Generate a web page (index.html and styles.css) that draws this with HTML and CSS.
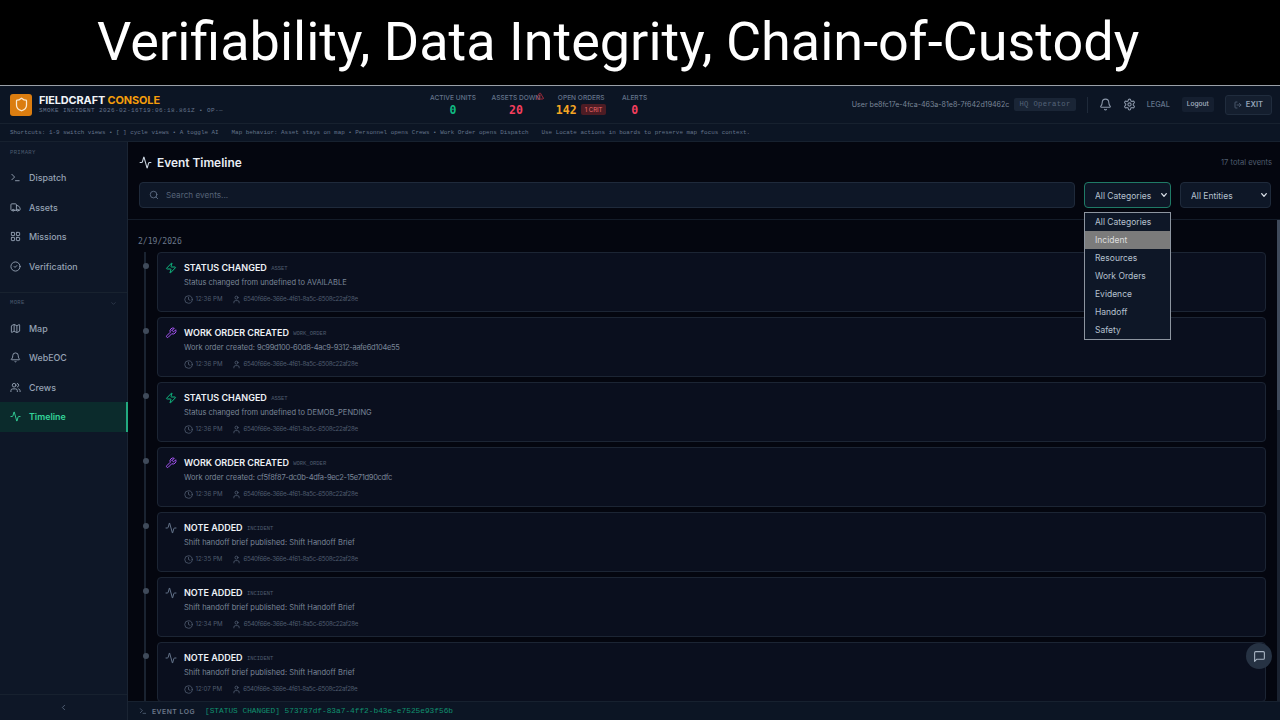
FILE: index.html
```html
<!DOCTYPE html>
<html lang="en">
<head>
<meta charset="utf-8">
<title>Event Timeline</title>
<link rel="stylesheet" href="styles.css">
</head>
<body>
<svg class="defs" width="0" height="0" aria-hidden="true">
  <symbol id="i-activity" viewBox="0 0 24 24"><path d="M22 12h-2.48a2 2 0 0 0-1.93 1.46l-2.35 8.36a.25.25 0 0 1-.48 0L9.24 2.18a.25.25 0 0 0-.48 0l-2.35 8.36A2 2 0 0 1 4.49 12H2"/></symbol>
  <symbol id="i-zap" viewBox="0 0 24 24"><path d="M4 14a1 1 0 0 1-.78-1.63l9.9-10.2a.5.5 0 0 1 .86.46l-1.92 6.02A1 1 0 0 0 13 10h7a1 1 0 0 1 .78 1.63l-9.9 10.2a.5.5 0 0 1-.86-.46l1.92-6.02A1 1 0 0 0 11 14z"/></symbol>
  <symbol id="i-wrench" viewBox="0 0 24 24"><path d="M14.7 6.3a1 1 0 0 0 0 1.4l1.6 1.6a1 1 0 0 0 1.4 0l3.77-3.77a6 6 0 0 1-7.94 7.94l-6.91 6.91a2.12 2.12 0 0 1-3-3l6.91-6.91a6 6 0 0 1 7.94-7.94l-3.76 3.76z"/></symbol>
  <symbol id="i-clock" viewBox="0 0 24 24"><circle cx="12" cy="12" r="10"/><path d="M12 6v6l4 2"/></symbol>
  <symbol id="i-user" viewBox="0 0 24 24"><path d="M19 21v-2a4 4 0 0 0-4-4H9a4 4 0 0 0-4 4v2"/><circle cx="12" cy="7" r="4"/></symbol>
  <symbol id="i-search" viewBox="0 0 24 24"><circle cx="11" cy="11" r="8"/><path d="m21 21-4.3-4.3"/></symbol>
  <symbol id="i-terminal" viewBox="0 0 24 24"><path d="M4 17l6-6-6-6"/><path d="M12 19h8"/></symbol>
  <symbol id="i-truck" viewBox="0 0 24 24"><path d="M14 18V6a2 2 0 0 0-2-2H4a2 2 0 0 0-2 2v11a1 1 0 0 0 1 1h2"/><path d="M15 18H9"/><path d="M19 18h2a1 1 0 0 0 1-1v-3.65a1 1 0 0 0-.22-.624l-3.48-4.35A1 1 0 0 0 17.52 8H14"/><circle cx="17" cy="18" r="2"/><circle cx="7" cy="18" r="2"/></symbol>
  <symbol id="i-grid" viewBox="0 0 24 24"><rect x="3" y="3" width="7" height="7" rx="1"/><rect x="14" y="3" width="7" height="7" rx="1"/><rect x="14" y="14" width="7" height="7" rx="1"/><rect x="3" y="14" width="7" height="7" rx="1"/></symbol>
  <symbol id="i-check" viewBox="0 0 24 24"><circle cx="12" cy="12" r="10"/><path d="m9 12 2 2 4-4"/></symbol>
  <symbol id="i-map" viewBox="0 0 24 24"><path d="M14.106 5.553a2 2 0 0 0 1.788 0l3.659-1.83A1 1 0 0 1 21 4.619v12.764a1 1 0 0 1-.553.894l-4.553 2.277a2 2 0 0 1-1.788 0l-4.212-2.106a2 2 0 0 0-1.788 0l-3.659 1.83A1 1 0 0 1 3 19.381V6.618a1 1 0 0 1 .553-.894l4.553-2.277a2 2 0 0 1 1.788 0z"/><path d="M15 5.764v15"/><path d="M9 3.236v15"/></symbol>
  <symbol id="i-bell" viewBox="0 0 24 24"><path d="M10.268 21a2 2 0 0 0 3.464 0"/><path d="M3.262 15.326A1 1 0 0 0 4 17h16a1 1 0 0 0 .74-1.673C19.41 13.956 18 12.499 18 8A6 6 0 0 0 6 8c0 4.499-1.411 5.956-2.738 7.326"/></symbol>
  <symbol id="i-users" viewBox="0 0 24 24"><path d="M16 21v-2a4 4 0 0 0-4-4H6a4 4 0 0 0-4 4v2"/><path d="M16 3.128a4 4 0 0 1 0 7.744"/><path d="M22 21v-2a4 4 0 0 0-3-3.87"/><circle cx="9" cy="7" r="4"/></symbol>
  <symbol id="i-settings" viewBox="0 0 24 24"><path d="M12.22 2h-.44a2 2 0 0 0-2 2v.18a2 2 0 0 1-1 1.73l-.43.25a2 2 0 0 1-2 0l-.15-.08a2 2 0 0 0-2.73.73l-.22.38a2 2 0 0 0 .73 2.73l.15.1a2 2 0 0 1 1 1.72v.51a2 2 0 0 1-1 1.74l-.15.09a2 2 0 0 0-.73 2.73l.22.38a2 2 0 0 0 2.73.73l.15-.08a2 2 0 0 1 2 0l.43.25a2 2 0 0 1 1 1.73V20a2 2 0 0 0 2 2h.44a2 2 0 0 0 2-2v-.18a2 2 0 0 1 1-1.73l.43-.25a2 2 0 0 1 2 0l.15.08a2 2 0 0 0 2.73-.73l.22-.39a2 2 0 0 0-.73-2.73l-.15-.08a2 2 0 0 1-1-1.74v-.5a2 2 0 0 1 1-1.74l.15-.09a2 2 0 0 0 .73-2.73l-.22-.38a2 2 0 0 0-2.73-.73l-.15.08a2 2 0 0 1-2 0l-.43-.25a2 2 0 0 1-1-1.73V4a2 2 0 0 0-2-2z"/><circle cx="12" cy="12" r="3"/></symbol>
  <symbol id="i-logout" viewBox="0 0 24 24"><path d="M16 17l5-5-5-5"/><path d="M21 12H9"/><path d="M9 21H5a2 2 0 0 1-2-2V5a2 2 0 0 1 2-2h4"/></symbol>
  <symbol id="i-alert" viewBox="0 0 24 24"><path d="m21.73 18-8-14a2 2 0 0 0-3.48 0l-8 14A2 2 0 0 0 4 21h16a2 2 0 0 0 1.73-3"/><path d="M12 9v4"/><path d="M12 17h.01"/></symbol>
  <symbol id="i-shield" viewBox="0 0 24 24"><path d="M20 13c0 5-3.5 7.5-7.66 8.95a1 1 0 0 1-.67-.01C7.5 20.5 4 18 4 13V6a1 1 0 0 1 1-1c2 0 4.5-1.2 6.24-2.72a1.17 1.17 0 0 1 1.52 0C14.51 3.81 17 5 19 5a1 1 0 0 1 1 1z"/></symbol>
  <symbol id="i-left" viewBox="0 0 24 24"><path d="m15 18-6-6 6-6"/></symbol>
  <symbol id="i-down" viewBox="0 0 24 24"><path d="m6 9 6 6 6-6"/></symbol>
  <symbol id="i-msg" viewBox="0 0 24 24"><path d="M21 15a2 2 0 0 1-2 2H7l-4 4V5a2 2 0 0 1 2-2h14a2 2 0 0 1 2 2z"/></symbol>
</svg>

<div class="banner"><h1 class="banner-title">Verifiability, Data Integrity, Chain-of-Custody</h1></div>

<div class="app">
  <header class="topbar">
    <div class="brand">
      <span class="logo"><svg class="ico logo-ico"><use href="#i-shield"/></svg></span>
      <div class="brand-text">
        <div class="brand-name">FIELDCRAFT <span class="brand-accent">CONSOLE</span></div>
        <div class="brand-sub">SMOKE INCIDENT 2026-02-16T19:06:18.861Z • OP-—</div>
      </div>
    </div>
    <div class="stats">
      <div class="stat"><div class="stat-label">ACTIVE UNITS</div><div class="stat-value green">0</div></div>
      <div class="stat stat-alerted"><div class="stat-label">ASSETS DOWN</div><div class="stat-value red">20</div><svg class="ico stat-alert"><use href="#i-alert"/></svg></div>
      <div class="stat"><div class="stat-label">OPEN ORDERS</div><div class="stat-row"><span class="stat-value amber">142</span><span class="crit">1 CRIT</span></div></div>
      <div class="stat"><div class="stat-label">ALERTS</div><div class="stat-value red">0</div></div>
    </div>
    <div class="userbar">
      <span class="user-id">User be8fc17e-4fca-463a-81e8-7f642d19462c</span>
      <span class="role">HQ Operator</span>
      <span class="divider"></span>
      <svg class="ico top-ico"><use href="#i-bell"/></svg>
      <svg class="ico top-ico"><use href="#i-settings"/></svg>
      <span class="legal">LEGAL</span>
      <span class="logout">Logout</span>
      <span class="exit"><svg class="ico exit-ico"><use href="#i-logout"/></svg>EXIT</span>
    </div>
  </header>
  <div class="hints">
    <span>Shortcuts: 1-9 switch views • [ ] cycle views • A toggle AI</span>
    <span>Map behavior: Asset stays on map • Personnel opens Crews • Work Order opens Dispatch</span>
    <span>Use Locate actions in boards to preserve map focus context.</span>
  </div>

  <div class="workspace">
    <aside class="sidebar">
      <div class="nav-scroll">
        <div class="nav-head">PRIMARY</div>
        <a class="nav-item"><svg class="ico nav-ico"><use href="#i-terminal"/></svg>Dispatch</a>
        <a class="nav-item"><svg class="ico nav-ico"><use href="#i-truck"/></svg>Assets</a>
        <a class="nav-item"><svg class="ico nav-ico"><use href="#i-grid"/></svg>Missions</a>
        <a class="nav-item"><svg class="ico nav-ico"><use href="#i-check"/></svg>Verification</a>
        <div class="nav-sep"></div>
        <div class="nav-head nav-head-more">MORE<svg class="ico more-ico"><use href="#i-down"/></svg></div>
        <a class="nav-item"><svg class="ico nav-ico"><use href="#i-map"/></svg>Map</a>
        <a class="nav-item"><svg class="ico nav-ico"><use href="#i-bell"/></svg>WebEOC</a>
        <a class="nav-item"><svg class="ico nav-ico"><use href="#i-users"/></svg>Crews</a>
        <a class="nav-item active"><svg class="ico nav-ico"><use href="#i-activity"/></svg>Timeline</a>
      </div>
      <div class="collapse"><svg class="ico collapse-ico"><use href="#i-left"/></svg></div>
    </aside>

    <main class="content">
      <section class="toolbar">
        <div class="title-row">
          <h2 class="page-title"><svg class="ico title-ico"><use href="#i-activity"/></svg>Event Timeline</h2>
          <span class="total">17 total events</span>
        </div>
        <div class="filters">
          <div class="search"><svg class="ico search-ico"><use href="#i-search"/></svg><span>Search events...</span></div>
          <div class="select-wrap">
            <select class="select select-focus"><option>All Categories</option></select>
            <ul class="options">
              <li>All Categories</li>
              <li class="hover">Incident</li>
              <li>Resources</li>
              <li>Work Orders</li>
              <li>Evidence</li>
              <li>Handoff</li>
              <li>Safety</li>
            </ul>
          </div>
          <select class="select select-b"><option>All Entities</option></select>
        </div>
      </section>
      <section class="feed">
        <div class="date">2/19/2026</div>
        <div class="events">
          <article class="event"><span class="dot"></span><div class="card"><svg class="ico ev-ico green"><use href="#i-zap"/></svg><div class="ev-body"><div class="ev-title">STATUS CHANGED <span class="ev-tag">ASSET</span></div><div class="ev-desc">Status changed from undefined to AVAILABLE</div><div class="ev-meta"><svg class="ico meta-ico"><use href="#i-clock"/></svg><span class="ev-time">12:36 PM</span><svg class="ico meta-ico"><use href="#i-user"/></svg><span class="meta-id">6540f66e-366e-4f61-8a5c-6508c22af28e</span></div></div></div></article>
          <article class="event"><span class="dot"></span><div class="card"><svg class="ico ev-ico purple"><use href="#i-wrench"/></svg><div class="ev-body"><div class="ev-title">WORK ORDER CREATED <span class="ev-tag">WORK_ORDER</span></div><div class="ev-desc">Work order created: <span class="uuid">9c99d100-60d8-4ac9-9312-aafe6d104e55</span></div><div class="ev-meta"><svg class="ico meta-ico"><use href="#i-clock"/></svg><span class="ev-time">12:36 PM</span><svg class="ico meta-ico"><use href="#i-user"/></svg><span class="meta-id">6540f66e-366e-4f61-8a5c-6508c22af28e</span></div></div></div></article>
          <article class="event"><span class="dot"></span><div class="card"><svg class="ico ev-ico green"><use href="#i-zap"/></svg><div class="ev-body"><div class="ev-title">STATUS CHANGED <span class="ev-tag">ASSET</span></div><div class="ev-desc">Status changed from undefined to DEMOB_PENDING</div><div class="ev-meta"><svg class="ico meta-ico"><use href="#i-clock"/></svg><span class="ev-time">12:36 PM</span><svg class="ico meta-ico"><use href="#i-user"/></svg><span class="meta-id">6540f66e-366e-4f61-8a5c-6508c22af28e</span></div></div></div></article>
          <article class="event"><span class="dot"></span><div class="card"><svg class="ico ev-ico purple"><use href="#i-wrench"/></svg><div class="ev-body"><div class="ev-title">WORK ORDER CREATED <span class="ev-tag">WORK_ORDER</span></div><div class="ev-desc">Work order created: <span class="uuid">cf5f8f87-dc0b-4dfa-9ec2-15e71d90cdfc</span></div><div class="ev-meta"><svg class="ico meta-ico"><use href="#i-clock"/></svg><span class="ev-time">12:36 PM</span><svg class="ico meta-ico"><use href="#i-user"/></svg><span class="meta-id">6540f66e-366e-4f61-8a5c-6508c22af28e</span></div></div></div></article>
          <article class="event"><span class="dot"></span><div class="card"><svg class="ico ev-ico gray"><use href="#i-activity"/></svg><div class="ev-body"><div class="ev-title">NOTE ADDED <span class="ev-tag">INCIDENT</span></div><div class="ev-desc">Shift handoff brief published: Shift Handoff Brief</div><div class="ev-meta"><svg class="ico meta-ico"><use href="#i-clock"/></svg><span class="ev-time">12:35 PM</span><svg class="ico meta-ico"><use href="#i-user"/></svg><span class="meta-id">6540f66e-366e-4f61-8a5c-6508c22af28e</span></div></div></div></article>
          <article class="event"><span class="dot"></span><div class="card"><svg class="ico ev-ico gray"><use href="#i-activity"/></svg><div class="ev-body"><div class="ev-title">NOTE ADDED <span class="ev-tag">INCIDENT</span></div><div class="ev-desc">Shift handoff brief published: Shift Handoff Brief</div><div class="ev-meta"><svg class="ico meta-ico"><use href="#i-clock"/></svg><span class="ev-time">12:34 PM</span><svg class="ico meta-ico"><use href="#i-user"/></svg><span class="meta-id">6540f66e-366e-4f61-8a5c-6508c22af28e</span></div></div></div></article>
          <article class="event"><span class="dot"></span><div class="card"><svg class="ico ev-ico gray"><use href="#i-activity"/></svg><div class="ev-body"><div class="ev-title">NOTE ADDED <span class="ev-tag">INCIDENT</span></div><div class="ev-desc">Shift handoff brief published: Shift Handoff Brief</div><div class="ev-meta"><svg class="ico meta-ico"><use href="#i-clock"/></svg><span class="ev-time">12:07 PM</span><svg class="ico meta-ico"><use href="#i-user"/></svg><span class="meta-id">6540f66e-366e-4f61-8a5c-6508c22af28e</span></div></div></div></article>
        </div>
        <span class="scrollbar"><span class="scroll-thumb"></span></span>
        <button class="chat"><svg class="ico chat-ico"><use href="#i-msg"/></svg></button>
      </section>
      <footer class="eventlog">
        <svg class="ico log-ico"><use href="#i-terminal"/></svg>
        <span class="log-label">EVENT LOG</span>
        <span class="log-line">[STATUS CHANGED] 573787df-83a7-4ff2-b43e-e7525e93f56b</span>
      </footer>
    </main>
  </div>
</div>
</body>
</html>
```

FILE: styles.css
```css
* { box-sizing: border-box; }
html, body { margin: 0; height: 100%; }
body {
  width: 1280px;
  height: 720px;
  overflow: hidden;
  background: #000;
  font-family: Inter, "Noto Sans", sans-serif;
  color: #cbd5e1;
  display: flex;
  flex-direction: column;
}
.defs { position: absolute; }
.ico {
  fill: none;
  stroke: currentColor;
  stroke-width: 2;
  stroke-linecap: round;
  stroke-linejoin: round;
  flex: none;
}

.banner {
  height: 85px;
  flex: none;
  background: #000;
  padding: 0 0 1px 97px;
  display: flex;
  align-items: center;
}
.banner-title {
  margin: 0;
  font-family: Roboto, sans-serif;
  font-weight: 400;
  font-size: 54px;
  line-height: 1;
  color: #fff;
  white-space: nowrap;
}

.app {
  flex: 1;
  min-height: 0;
  display: flex;
  flex-direction: column;
  border-top: 1px solid #9aa0a8;
  background: #0c1524;
}

.topbar {
  height: 38px;
  flex: none;
  display: flex;
  align-items: center;
  padding: 0 8px 0 10px;
  background: #0c1524;
  border-bottom: 1px solid #17212f;
  position: relative;
}
.brand { display: flex; align-items: center; gap: 7px; width: 420px; }
.logo {
  width: 22px; height: 22px;
  border-radius: 3px;
  background: #db7d10;
  display: flex; align-items: center; justify-content: center;
  color: #fbe9cf;
}
.logo-ico { width: 15px; height: 15px; }
.brand-name { font-size: 10.9px; font-weight: 700; color: #f1f5f9; line-height: 12px; letter-spacing: -0.1px; }
.brand-accent { color: #f59e0b; }
.brand-sub {
  font-family: "Liberation Mono", monospace;
  font-size: 6px;
  line-height: 8px;
  color: #64748b;
  letter-spacing: 0.4px;
  margin-top: 1px;
  white-space: nowrap;
}

.stats { display: flex; gap: 15.5px; margin-top: 1px; }
.stat { text-align: center; position: relative; }
.stat-label { font-size: 6.6px; font-weight: 500; color: #64748b; line-height: 9px; white-space: nowrap; }
.stat-value {
  font-family: "DejaVu Sans Mono", monospace;
  font-size: 11.5px;
  line-height: 14px;
  font-weight: 700;
}
.stat-row { display: flex; align-items: center; gap: 4px; }
.crit {
  font-size: 6px;
  line-height: 11px;
  padding: 0 4px;
  border-radius: 2px;
  background: #4d1c24;
  color: #ef6a6a;
}
.stat-alert { position: absolute; width: 8px; height: 8px; top: -2px; right: -4px; color: #dc3545; stroke-width: 2; }
.green { color: #10b981; }
.red { color: #f43f5e; }
.amber { color: #f5a623; }
.purple { color: #a855f7; }
.gray { color: #64748b; }

.userbar { margin-left: auto; display: flex; align-items: center; }
.user-id { font-size: 7.1px; color: #7b8799; white-space: nowrap; }
.role {
  font-family: "Liberation Mono", monospace;
  font-size: 7.2px;
  line-height: 13px;
  letter-spacing: 0.35px;
  padding: 0 5px;
  margin-left: 5px;
  border-radius: 2px;
  background: #1a2536;
  color: #556478;
  white-space: nowrap;
}
.divider { width: 1px; height: 16px; background: #1f2a3a; margin: 0 11px; }
.top-ico { width: 13px; height: 13px; color: #8a96a8; margin-right: 11px; }
.legal { font-size: 7.3px; font-weight: 500; color: #64748b; margin-right: 12px; }
.logout {
  font-size: 6.6px; font-weight: 500; line-height: 15px;
  padding: 0 5px; border-radius: 2px; background: #151f30; color: #aab5c4;
}
.exit {
  display: flex; align-items: center; gap: 4px;
  margin-left: 11px;
  height: 20px;
  padding: 0 8px;
  font-size: 7.6px; font-weight: 600;
  color: #94a3b8;
  background: #141e2e;
  border: 1px solid #202c3d;
  border-radius: 3px;
}
.exit-ico { width: 8px; height: 8px; color: #64748b; }

.hints {
  height: 18px;
  flex: none;
  display: flex;
  align-items: center;
  gap: 13px;
  padding-left: 10px;
  font-family: "Liberation Mono", monospace;
  font-size: 5.9px;
  color: #64748b;
  background: #0c1524;
  border-bottom: 1px solid #17212f;
  white-space: nowrap;
}

.workspace { flex: 1; min-height: 0; display: flex; }

.sidebar {
  width: 128px;
  flex: none;
  display: flex;
  flex-direction: column;
  background: #0e1727;
  border-right: 1px solid #1a2433;
}
.nav-scroll { flex: 1; min-height: 0; }
.nav-head {
  font-family: "Liberation Mono", monospace;
  font-size: 5.6px;
  line-height: 8px;
  letter-spacing: 0.3px;
  color: #4b5a6e;
  padding: 7px 10px 6px;
}
.nav-head-more {
  display: flex; align-items: center; justify-content: space-between;
  padding: 6px 10px 6px;
}
.more-ico { width: 7px; height: 7px; color: #3f4c5e; margin-right: 0; }
.nav-sep { height: 1px; background: #18222f; margin-top: 11px; }
.nav-item {
  height: 29.6px;
  display: flex;
  align-items: center;
  gap: 8px;
  padding-left: 10px;
  font-size: 8.9px;
  font-weight: 500;
  color: #96a3b5;
  white-space: nowrap;
}
.nav-ico { width: 11px; height: 11px; }
.nav-item.active {
  background: #0b2b2c;
  color: #34d399;
  border-right: 2px solid #22a97f;
  margin-right: -1px;
  font-weight: 600;
}
.collapse {
  height: 26px;
  flex: none;
  border-top: 1px solid #17212f;
  display: flex; align-items: center; justify-content: center;
  color: #64748b;
}
.collapse-ico { width: 9px; height: 9px; }

.content {
  flex: 1;
  min-width: 0;
  display: flex;
  flex-direction: column;
  background: #04060f;
  position: relative;
}
.toolbar {
  height: 78px;
  flex: none;
  padding: 0 9px 0 11px;
  border-bottom: 1px solid #141c29;
}
.title-row { height: 40px; display: flex; align-items: center; justify-content: space-between; }
.page-title {
  display: flex; align-items: center; gap: 5px;
  margin: 0;
  font-size: 11.9px;
  font-weight: 600;
  color: #e8edf4;
}
.title-ico { width: 13px; height: 13px; color: #cbd5e1; }
.total { font-size: 7.6px; color: #4f5c6e; margin-right: -1px; }
.filters { display: flex; align-items: center; gap: 9px; }
.search {
  flex: 1;
  height: 26px;
  display: flex; align-items: center; gap: 7px;
  padding-left: 9px;
  font-size: 8.2px;
  color: #566377;
  background: #0e1727;
  border: 1px solid #1f2a3b;
  border-radius: 4px;
}
.search-ico { width: 10px; height: 10px; color: #64748b; }
.select-wrap { position: relative; }
.select {
  display: block;
  height: 26px;
  padding: 1px 0 0 10px;
  appearance: none;
  font-family: inherit;
  font-size: 8.5px;
  color: #b6c1cf;
  background: #0e1727 url("data:image/svg+xml,%3Csvg xmlns='http://www.w3.org/2000/svg' viewBox='0 0 24 24' fill='none' stroke='%23d5dbe3' stroke-width='4' stroke-linecap='round' stroke-linejoin='round'%3E%3Cpath d='m5 8 7 8 7-8'/%3E%3C/svg%3E") no-repeat right 2px center / 8px 8px;
  border: 1px solid #1f2a3b;
  border-radius: 4px;
}
.select-focus { width: 87px; border-color: #1f7a66; }
.select-b { width: 91px; }
.options {
  position: absolute;
  z-index: 5;
  top: 30px;
  left: 0;
  width: 87px;
  margin: 0;
  padding: 0;
  list-style: none;
  background: #0e1727;
  border: 1px solid #8d95a0;
  font-size: 8.5px;
  color: #b6c1cf;
}
.options li { height: 18px; line-height: 18px; padding-left: 10px; }
.options .hover { background: #7b7b7b; color: #dedede; }

.feed {
  flex: 1;
  min-height: 0;
  overflow: hidden;
  position: relative;
  padding: 14px 14px 0 10px;
}
.date {
  font-family: "DejaVu Sans Mono", monospace;
  font-size: 8.1px;
  line-height: 14px;
  color: #6b7789;
  margin-bottom: 4px;
}
.events {
  display: flex;
  flex-direction: column;
  gap: 5px;
  position: relative;
}
.events::before {
  content: "";
  position: absolute;
  left: 6px; top: 0; bottom: 0;
  width: 2px;
  background: #1a2331;
}
.event { display: flex; position: relative; flex: none; }
.dot {
  position: absolute;
  left: 5px; top: 11px;
  width: 6px; height: 6px;
  border-radius: 50%;
  background: #3f4a5a;
}
.card {
  margin-left: 19px;
  flex: 1;
  height: 60px;
  display: flex;
  padding: 9px 0 0 7px;
  gap: 7px;
  background: #0a0f1e;
  border: 1px solid #1c2534;
  border-radius: 4px;
}
.ev-ico { width: 12px; height: 12px; }
.ev-body { min-width: 0; }
.ev-title { font-size: 9px; font-weight: 600; line-height: 12px; color: #eef2f7; white-space: nowrap; }
.ev-tag {
  font-family: "Liberation Mono", monospace;
  font-size: 5.5px;
  font-weight: 400;
  color: #4f5c6e;
  vertical-align: 1px;
  margin-left: 2px;
}
.ev-desc { font-size: 7.5px; line-height: 11px; margin-top: 2px; color: #7a8698; white-space: nowrap; }
.uuid { letter-spacing: -0.3px; }
.ev-meta {
  display: flex; align-items: center;
  margin-top: 6px;
  font-size: 6.2px;
  line-height: 10px;
  color: #4f5c6e;
  white-space: nowrap;
}
.meta-ico { width: 9px; height: 9px; margin-right: 2.5px; color: #566377; }
.ev-time { margin-right: 9.5px; }
.meta-id { letter-spacing: -0.33px; }
.scrollbar {
  position: absolute;
  right: 0; top: 0; bottom: 0;
  width: 3px;
  background: #1a2230;
}
.scroll-thumb { display: block; height: 190px; background: #3f4a5b; }
.chat {
  position: absolute;
  right: 8px;
  bottom: 32px;
  width: 26px; height: 26px;
  padding: 0;
  border: 0;
  border-radius: 50%;
  background: #263243;
  color: #a9b5c4;
  display: flex; align-items: center; justify-content: center;
  z-index: 3;
}
.chat-ico { width: 13px; height: 13px; }

.eventlog {
  height: 19px;
  flex: none;
  display: flex;
  align-items: center;
  padding-left: 11px;
  background: #0c1524;
  border-top: 1px solid #17212f;
  position: relative;
  white-space: nowrap;
}
.log-ico { width: 8px; height: 8px; color: #64748b; margin-right: 5px; }
.log-label { font-size: 6.8px; font-weight: 600; letter-spacing: 0.5px; color: #6b7789; margin-right: 10px; }
.log-line { font-family: "Liberation Mono", monospace; font-size: 7.8px; color: #10916f; }
```
